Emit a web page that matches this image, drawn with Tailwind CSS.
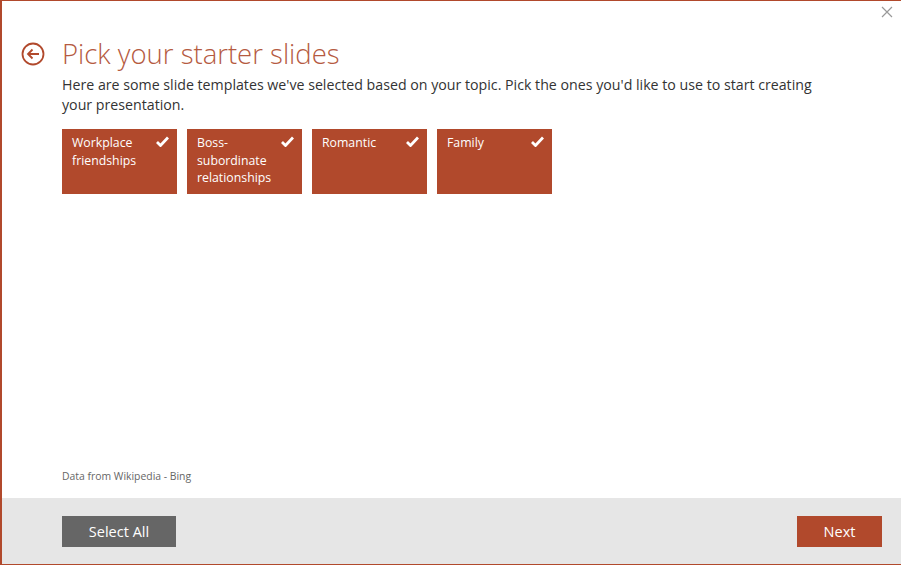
<!DOCTYPE html>
<html lang="en">
<head>
  <meta charset="UTF-8">
  <title>Pick your starter slides</title>
  <script src="https://cdn.jsdelivr.net/npm/@tailwindcss/browser@4"></script>
</head>
<body class="bg-white font-['Open_Sans',sans-serif]">
  <div class="relative flex flex-col h-[565px] w-[901px] overflow-hidden border-t-[1px] border-b-[1px] border-l-2 border-[#b1492c]">
    <button class="absolute right-[8px] top-[5px]">
      <svg width="12" height="12" viewBox="0 0 12 12" fill="none" stroke="#999" stroke-width="1.2"><path d="M1 1l10 10M11 1L1 11"/></svg>
    </button>

    <div class="flex-1 flex flex-col pl-[19px]">
      <div class="flex items-center mt-[35px] h-[36px]">
        <svg width="24" height="24" viewBox="0 0 24 24" fill="none" stroke="#b1492c" stroke-width="1.8" class="mr-[17px]">
          <circle cx="12" cy="12" r="10.5"/>
          <path d="M18 12H7M11.5 7.5L7 12l4.5 4.5"/>
        </svg>
        <h1 class="text-[27.5px] font-light text-[#b55a41] leading-[36px]">Pick your starter slides</h1>
      </div>
      <div class="pl-[41px]">
        <p class="mt-[3px] text-[14.2px] leading-[20px] text-[#333] w-[770px]">Here are some slide templates we've selected based on your topic. Pick the ones you'd like to use to start creating your presentation.</p>
        <div class="flex gap-[10px] mt-[14px]">
          <div class="flex justify-between w-[115px] h-[65px] bg-[#b1492c] text-white text-[12.3px] leading-[17.5px] pl-[10px] pr-[8px] pt-[5px]">
            <span>Workplace friendships</span>
            <svg width="13" height="11" viewBox="0 0 13 11" fill="none" stroke="white" stroke-width="2.8" class="mt-[2px] shrink-0"><path d="M1 6l3.5 3.5L12 1.5"/></svg>
          </div>
          <div class="flex justify-between w-[115px] h-[65px] bg-[#b1492c] text-white text-[12.3px] leading-[17.5px] pl-[10px] pr-[8px] pt-[5px]">
            <span>Boss-subordinate relationships</span>
            <svg width="13" height="11" viewBox="0 0 13 11" fill="none" stroke="white" stroke-width="2.8" class="mt-[2px] shrink-0"><path d="M1 6l3.5 3.5L12 1.5"/></svg>
          </div>
          <div class="flex justify-between w-[115px] h-[65px] bg-[#b1492c] text-white text-[12.3px] leading-[17.5px] pl-[10px] pr-[8px] pt-[5px]">
            <span>Romantic</span>
            <svg width="13" height="11" viewBox="0 0 13 11" fill="none" stroke="white" stroke-width="2.8" class="mt-[2px] shrink-0"><path d="M1 6l3.5 3.5L12 1.5"/></svg>
          </div>
          <div class="flex justify-between w-[115px] h-[65px] bg-[#b1492c] text-white text-[12.3px] leading-[17.5px] pl-[10px] pr-[8px] pt-[5px]">
            <span>Family</span>
            <svg width="13" height="11" viewBox="0 0 13 11" fill="none" stroke="white" stroke-width="2.8" class="mt-[2px] shrink-0"><path d="M1 6l3.5 3.5L12 1.5"/></svg>
          </div>
        </div>
        <p class="mt-[275px] text-[10.4px] leading-[14px] text-[#666]">Data from Wikipedia - Bing</p>
      </div>
    </div>

    <div class="flex items-center justify-between h-[66px] bg-[#e6e6e6] pl-[60px] pr-[19px]">
      <button class="w-[114px] h-[31px] bg-[#666666] text-white text-[14.5px] pt-[1px]">Select All</button>
      <button class="w-[85px] h-[31px] bg-[#b1492c] text-white text-[14.5px] pt-[1px]">Next</button>
    </div>
  </div>
</body>
</html>
